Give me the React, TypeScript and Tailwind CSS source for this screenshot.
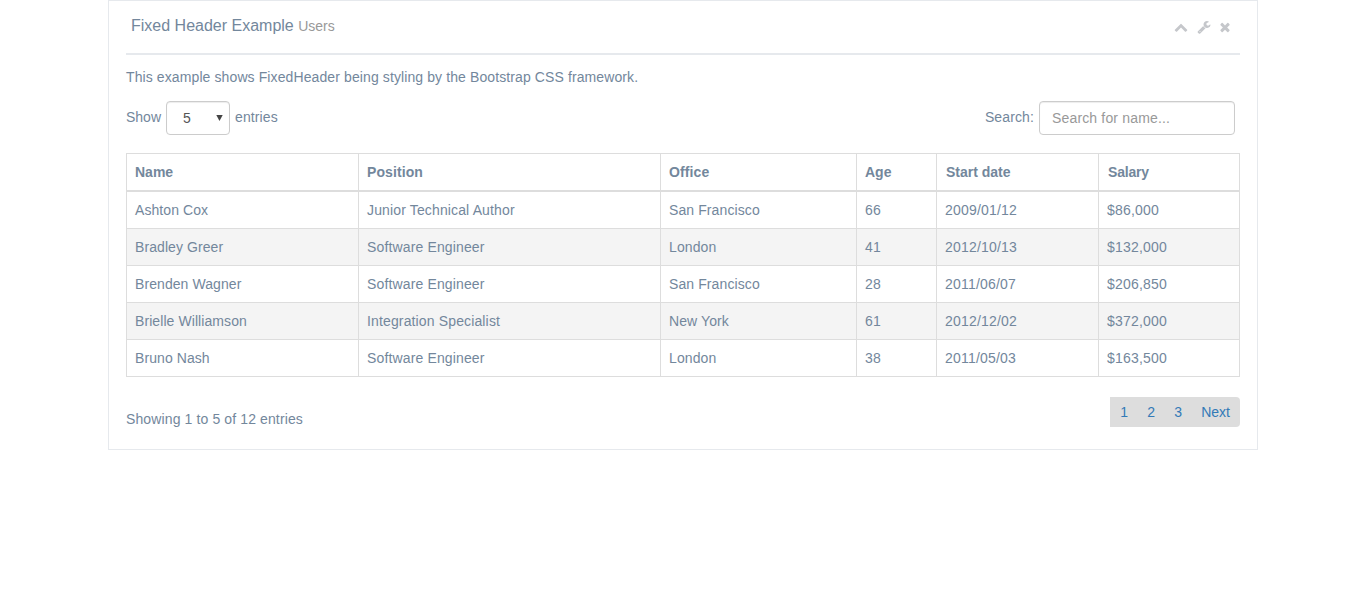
import React from "react";

const columns = [
  { label: "Name", head: "w-[232px] px-2", cell: "tracking-[0.08px]" },
  { label: "Position", head: "w-[302px] px-2 tracking-[0.1px]", cell: "tracking-[0.14px]" },
  { label: "Office", head: "w-[196px] px-2 tracking-[0.1px]", cell: "tracking-[0.1px]" },
  { label: "Age", head: "w-[80px] px-2", cell: "tracking-[0.1px]" },
  { label: "Start date", head: "w-[162px] pr-2 pl-[9px]", cell: "tracking-[0.2px]" },
  { label: "Salary", head: "w-[142px] pr-2 pl-[9px] tracking-[-0.2px]", cell: "tracking-[0.2px]" },
];

const rows = [
  ["Ashton Cox", "Junior Technical Author", "San Francisco", "66", "2009/01/12", "$86,000"],
  ["Bradley Greer", "Software Engineer", "London", "41", "2012/10/13", "$132,000"],
  ["Brenden Wagner", "Software Engineer", "San Francisco", "28", "2011/06/07", "$206,850"],
  ["Brielle Williamson", "Integration Specialist", "New York", "61", "2012/12/02", "$372,000"],
  ["Bruno Nash", "Software Engineer", "London", "38", "2011/05/03", "$163,500"],
];

const icons = {
  chevronUp:
    "M1683 1331l-166 165q-19 19-45 19t-45-19l-531-531-531 531q-19 19-45 19t-45-19l-166-165q-19-19-19-45.500t19-45.500l742-741q19-19 45-19t45 19l742 741q19 19 19 45.500t-19 45.500z",
  wrench:
    "M448 1472q0-26-19-45t-45-19-45 19-19 45 19 45 45 19 45-19 19-45zm644-420l-682 682q-37 37-90 37-52 0-91-37l-106-108q-38-36-38-90 0-53 38-91l681-681q39 98 114.500 173.500t173.500 114.500zm634-435q0 39-23 106-47 134-164.500 217.500t-258.500 83.500q-185 0-316.500-131.500t-131.500-316.500 131.500-316.500 316.500-131.500q58 0 121.500 16.500t107.500 46.500q16 11 16 28t-16 28l-293 169v224l193 107q5-3 79-48.500t135.500-81 70.500-35.500q15 0 23.500 10t8.500 25z",
  close:
    "M1490 1322q0 40-28 68l-136 136q-28 28-68 28t-68-28l-294-294-294 294q-28 28-68 28t-68-28l-136-136q-28-28-28-68t28-68l294-294-294-294q-28-28-28-68t28-68l136-136q28-28 68-28t68 28l294 294 294-294q28-28 68-28t68 28l136 136q28 28 28 68t-28 68l-294 294 294 294q28 28 28 68z",
};

function Icon({ path, className }: { path: string; className?: string }) {
  return (
    <svg viewBox="0 0 1792 1792" className={`size-3.5 fill-[#c5c7cb] ${className ?? ""}`}>
      <path d={path} />
    </svg>
  );
}

export default function App() {
  return (
    <main className="mx-auto h-[450px] w-[1150px] border border-[#e6e9ed] bg-white px-[17px] font-['Liberation_Sans',Arial,sans-serif] text-sm leading-5 text-[#73879c]">
      <header className="flex h-[54px] items-start justify-between border-b-2 border-[#e6e9ed] pr-2 pl-[5px]">
        <h2 className="pt-[15px] text-base leading-5">
          Fixed Header Example <small className="text-sm text-[#999]">Users</small>
        </h2>
        <div className="flex pt-[19px]">
          <Icon path={icons.chevronUp} />
          <Icon path={icons.wrench} className="ml-[9px]" />
          <Icon path={icons.close} className="ml-[7px]" />
        </div>
      </header>

      <p className="mt-3 tracking-[0.105px]">
        This example shows FixedHeader being styling by the Bootstrap CSS framework.
      </p>

      <div className="mt-3.5 flex h-[34px] items-start justify-between">
        <label className="flex">
          <span className="mt-1.5 w-10">Show</span>
          <span className="flex h-[34px] w-16 items-center justify-between rounded border border-[#ccc] pr-1.5 pl-4 text-[#555] shadow-[inset_0_1px_1px_rgba(0,0,0,0.075)]">
            5
            <svg viewBox="0 0 7 6" className="h-1.5 w-[7px] fill-[#444]">
              <path d="M.3 0h6.400L3.500 6z" />
            </svg>
          </span>
          <span className="mt-1.5 ml-[5px] tracking-[0.12px]">entries</span>
        </label>
        <label className="flex pr-[5px]">
          <span className="mt-1.5 mr-[5px] tracking-[0.12px]">Search:</span>
          <input
            type="search"
            placeholder="Search for name..."
            className="h-[34px] w-[196px] rounded border border-[#ccc] px-3 tracking-[0.16px] text-[#555] shadow-[inset_0_1px_1px_rgba(0,0,0,0.075)] placeholder:text-[#999]"
          />
        </label>
      </div>

      <table className="mt-[18px] w-[1114px] table-fixed border-separate border-spacing-0">
        <thead>
          <tr>
            {columns.map((c) => (
              <th
                key={c.label}
                className={`h-[39px] border-t border-b-2 border-l border-[#ddd] py-0 text-left font-bold last:border-r ${c.head}`}
              >
                {c.label}
              </th>
            ))}
          </tr>
        </thead>
        <tbody>
          {rows.map((r) => (
            <tr key={r[0]} className="even:bg-[#f4f4f4]">
              {r.map((v, i) => (
                <td
                  key={i}
                  className={`h-[37px] border-b border-l border-[#ddd] px-2 py-0 last:border-r ${columns[i].cell}`}
                >
                  {v}
                </td>
              ))}
            </tr>
          ))}
        </tbody>
      </table>

      <footer className="flex justify-between pt-5">
        <span className="mt-3 tracking-[0.12px]">Showing 1 to 5 of 12 entries</span>
        <nav className="flex h-[30px] items-center rounded-r bg-[#ddd] pr-2.5 pl-2.5 text-[#337ab7]">
          <a className="w-[27px]">1</a>
          <a className="w-[27px]">2</a>
          <a className="w-[27px]">3</a>
          <a>Next</a>
        </nav>
      </footer>
    </main>
  );
}
